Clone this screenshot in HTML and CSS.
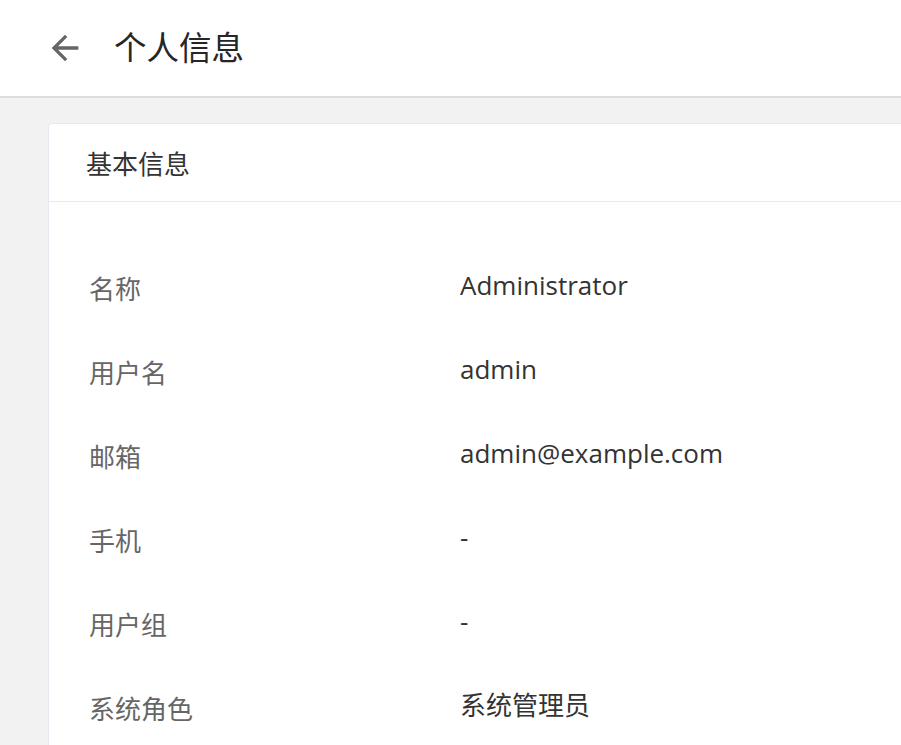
FILE: index.html
```html
<!DOCTYPE html>
<html lang="zh">
<head>
<meta charset="utf-8">
<title>个人信息</title>
<link rel="stylesheet" href="styles.css">
</head>
<body>
<header class="topbar">
  <button class="back" aria-label="返回">
    <svg viewBox="0 0 24 24" width="40" height="40"><path d="M20 11H7.83l5.59-5.59L12 4l-8 8 8 8 1.41-1.41L7.83 13H20v-2z" fill="#666"/></svg>
  </button>
  <h1 class="title">个人信息</h1>
</header>
<main class="main">
  <section class="card">
    <div class="card-head">基本信息</div>
    <div class="card-body">
      <div class="row"><div class="label">名称</div><div class="value">Administrator</div></div>
      <div class="row"><div class="label">用户名</div><div class="value">admin</div></div>
      <div class="row"><div class="label">邮箱</div><div class="value">admin@example.com</div></div>
      <div class="row"><div class="label">手机</div><div class="value">-</div></div>
      <div class="row"><div class="label">用户组</div><div class="value">-</div></div>
      <div class="row"><div class="label">系统角色</div><div class="value">系统管理员</div></div>
    </div>
  </section>
</main>
</body>
</html>
```
FILE: styles.css
```css
* { box-sizing: border-box; }
html, body { margin: 0; padding: 0; }
body {
  font-family: "Open Sans", "Noto Sans CJK SC", sans-serif;
  background: #f2f2f2;
  color: #333;
  height: 745px;
  overflow: hidden;
}
.topbar {
  height: 98px;
  background: #fff;
  border-bottom: 2px solid #dcdcdc;
  display: flex;
  align-items: center;
  padding-left: 45px;
}
.back {
  width: 40px;
  height: 40px;
  padding: 0;
  border: 0;
  background: none;
  display: flex;
}
.title {
  margin: 0 0 0 29px;
  font-size: 32.5px;
  font-weight: 400;
  color: #262626;
  line-height: 40px;
}
.main {
  padding: 25px 0 0 48px;
}
.card {
  background: #fff;
  border: 1px solid #e6e9ef;
  border-right: 0;
  border-bottom: 0;
  border-radius: 4px 0 0 0;
  height: 622px;
}
.card-head {
  height: 78px;
  border-bottom: 1px solid #e6e9ef;
  display: flex;
  align-items: center;
  padding-left: 37px;
  font-size: 26px;
  color: #333;
}
.card-body {
  padding: 67px 0 0 40px;
  display: flex;
  flex-direction: column;
  gap: 44px;
}
.row {
  display: grid;
  grid-template-columns: 371px 1fr;
  align-items: start;
}
.label {
  font-size: 26px;
  line-height: 40px;
  color: #666;
}
.value {
  font-size: 26px;
  line-height: 32px;
  color: #333;
}
```
